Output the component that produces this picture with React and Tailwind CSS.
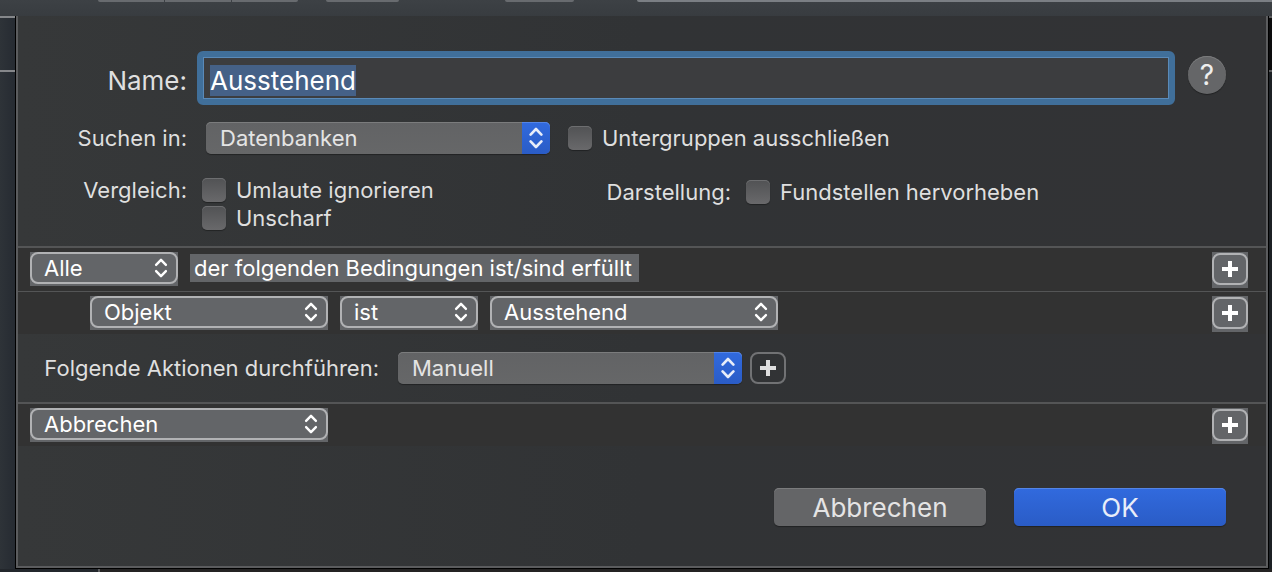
import { useEffect, useRef } from "react";

function Chevrons({ className }) {
  return (
    <svg viewBox="0 0 14 22" className={className} fill="none" stroke="currentColor" strokeWidth="2.6" strokeLinecap="round" strokeLinejoin="round" aria-hidden="true">
      <path d="M1.6 7.6 7 2l5.4 5.6M1.6 14.4 7 20l5.4-5.6" />
    </svg>
  );
}

function Plus() {
  return (
    <svg viewBox="0 0 16 16" className="h-4 w-4" fill="currentColor" aria-hidden="true">
      <path d="M6 0h4v6h6v4h-6v6H6v-6H0V6h6z" />
    </svg>
  );
}

function PopUp({ id, option }) {
  return (
    <div className="grid w-[344px] rounded-[5px] bg-linear-to-b from-[#626365] to-[#666768] shadow-[0_1px_1px_rgba(0,0,0,0.35),inset_0_1px_0_#7b7c7d]">
      <select id={id} className="col-start-1 row-start-1 h-8 w-full appearance-none bg-transparent pl-[14px] text-[22px] leading-8 text-[#e4e4e4] outline-none">
        <option>{option}</option>
      </select>
      <span className="pointer-events-none col-start-1 row-start-1 flex h-8 w-7 items-center justify-center justify-self-end rounded-r-[5px] bg-linear-to-b from-[#316ade] to-[#2a5cc6] text-[#e8edf9] shadow-[inset_0_1px_0_#5485e6]">
        <Chevrons className="h-[22px] w-[14px]" />
      </span>
    </div>
  );
}

function RuleSelect({ label, option, width }) {
  return (
    <div className={`grid bg-[#636568] pb-[2px] ${width}`}>
      <select aria-label={label} className="col-start-1 row-start-1 h-8 w-full appearance-none rounded-lg border-2 border-[#b1b2b4] bg-transparent pl-3 text-[22px] leading-7 text-white outline-none">
        <option>{option}</option>
      </select>
      <span className="pointer-events-none col-start-1 row-start-1 flex h-8 items-center justify-self-end pr-[10px] text-white">
        <Chevrons className="h-5 w-[14px]" />
      </span>
    </div>
  );
}

function RuleAdd({ label }) {
  return (
    <div className="ml-auto h-9 w-9 bg-[#636568] pt-px">
      <button type="button" aria-label={label} className="flex h-8 w-9 items-center justify-center rounded-lg border-2 border-[#b1b2b4] text-white">
        <Plus />
      </button>
    </div>
  );
}

function Check({ children }) {
  return (
    <label className="flex h-7 items-center gap-[10px]">
      <input type="checkbox" className="h-6 w-6 appearance-none rounded-[5px] bg-linear-to-b from-[#515254] to-[#69696b] shadow-[0_1px_1px_rgba(0,0,0,0.35),inset_0_1px_0_#6d6e70]" />
      <span>{children}</span>
    </label>
  );
}

export default function App() {
  const nameRef = useRef(null);

  useEffect(() => {
    nameRef.current.focus();
    nameRef.current.select();
  }, []);

  return (
    <div className="flex min-h-screen flex-col bg-[#242323] font-['Inter',sans-serif] text-[22px] leading-7 font-[425] text-[#dfdfdf]">
      <header className="flex h-4 bg-linear-to-b from-[#3d4145] to-[#383c40] pl-[98px]">
        <div className="flex h-[2px] w-[200px] gap-px overflow-hidden rounded-b-md">
          <span className="flex-1 bg-[#686b6f]" />
          <span className="flex-1 bg-[#686b6f]" />
          <span className="flex-1 bg-[#686b6f]" />
        </div>
        <div className="ml-7 h-[2px] w-[73px] rounded-b-md bg-[#686b6f]" />
        <div className="ml-[106px] h-[2px] w-[69px] rounded-b-md bg-[#686b6f]" />
        <div className="ml-[63px] h-[2px] flex-1 rounded-bl-md bg-[#7b7f84]" />
      </header>

      <div className="flex flex-1">
        <div className="w-[15px] bg-linear-to-r from-[#2e3338] to-[#262b32]">
          <div className="h-14 border-y-2 border-[#85878a]" />
        </div>

        <form onSubmit={(e) => e.preventDefault()} className="flex min-w-0 flex-1 flex-col border-x border-b border-black">
          <div className="flex flex-1 flex-col border-x-2 border-b-2 border-[#5b5c5e] bg-linear-to-r from-[#363839] via-[#313335] to-[#323335]">
            <div className="flex items-center pt-[35px] pr-10">
              <label htmlFor="name" className="w-[169px] pt-[6px] text-right text-[26px] font-normal">Name:</label>
              <input
                id="name"
                ref={nameRef}
                type="text"
                defaultValue="Ausstehend"
                className="ml-[10px] h-[54px] min-w-0 flex-1 rounded-md border-6 border-[#406f9a] bg-[#3c3d3f] pt-1 pl-[7px] text-[26px] leading-[34px] font-normal text-white shadow-[inset_0_0_0_1px_#5a8ab8] outline-none selection:bg-[#466289]/99 selection:text-white"
              />
              <button type="button" aria-label="Hilfe" className="mb-[6px] ml-[13px] flex h-[38px] w-[38px] items-center justify-center rounded-full bg-[#656668] text-[28px] leading-none font-normal text-[#eeeeee] shadow-[0_1px_1px_rgba(0,0,0,0.35),inset_0_1px_0_#7b7c7d]">
                ?
              </button>
            </div>

            <div className="mt-[17px] flex items-center">
              <label htmlFor="scope" className="w-[169px] text-right">Suchen in:</label>
              <div className="ml-[19px]">
                <PopUp id="scope" option="Datenbanken" />
              </div>
              <div className="ml-[18px]">
                <Check>Untergruppen ausschließen</Check>
              </div>
            </div>

            <div className="mt-[22px] flex items-start">
              <span className="w-[169px] text-right">Vergleich:</span>
              <div className="ml-[15px] w-[387px]">
                <Check>Umlaute ignorieren</Check>
                <Check>Unscharf</Check>
              </div>
              <div className="mt-[2px] flex">
                <span className="w-[142px] text-right">Darstellung:</span>
                <div className="ml-[15px]">
                  <Check>Fundstellen hervorheben</Check>
                </div>
              </div>
            </div>

            <div className="mt-[14px] flex h-[45px] items-start gap-3 border-t-2 border-[#545556] bg-[#323232] pt-1 pr-[18px] pl-3">
              <RuleSelect label="Verknüpfung" option="Alle" width="w-[148px]" />
              <span className="mt-[2px] bg-[#636568] pr-[7px] pl-1 text-white">der folgenden Bedingungen ist/sind erfüllt</span>
              <RuleAdd label="Bedingung hinzufügen" />
            </div>
            <div className="flex h-[43px] items-start gap-3 border-t border-[#545556] bg-[#323232] pt-1 pr-[18px] pl-[72px]">
              <RuleSelect label="Eigenschaft" option="Objekt" width="w-[238px]" />
              <RuleSelect label="Operator" option="ist" width="w-[138px]" />
              <RuleSelect label="Wert" option="Ausstehend" width="w-[288px]" />
              <RuleAdd label="Weitere Bedingung hinzufügen" />
            </div>

            <div className="flex items-center pt-[18px] pb-[18px]">
              <label htmlFor="actions" className="w-[361px] text-right">Folgende Aktionen durchführen:</label>
              <div className="ml-[19px]">
                <PopUp id="actions" option="Manuell" />
              </div>
              <button type="button" aria-label="Aktion hinzufügen" className="ml-2 flex h-8 w-9 items-center justify-center rounded-lg border-2 border-[#717274] text-[#dfdfdf]">
                <Plus />
              </button>
            </div>

            <div className="flex h-11 items-start border-t-2 border-[#545556] bg-[#323232] pt-1 pr-[18px] pl-3">
              <RuleSelect label="Aktion" option="Abbrechen" width="w-[298px]" />
              <RuleAdd label="Weitere Aktion hinzufügen" />
            </div>

            <div className="flex justify-end gap-7 pt-[42px] pr-10 pb-10 text-[26px] leading-[38px] font-normal">
              <button type="button" className="h-[38px] w-[212px] rounded-[5px] bg-[#646567] pt-px text-[#e4e4e4] shadow-[0_1px_1px_rgba(0,0,0,0.35),inset_0_1px_0_#7b7c7d]">Abbrechen</button>
              <button type="submit" className="h-[38px] w-[212px] rounded-[5px] bg-linear-to-b from-[#316ade] to-[#2a5cc6] pt-px text-[#e8edf9] shadow-[0_1px_1px_rgba(0,0,0,0.35),inset_0_1px_0_#5485e6]">OK</button>
            </div>
          </div>
        </form>

        <div className="w-[3px] bg-[#1c2024]">
          <div className="h-14 border-y-2 border-[#5b5c5e] bg-[#0c0c0d]" />
        </div>
      </div>
      <footer className="flex h-[3px] bg-[#242323]">
        <span className="w-[98px] bg-[#23272c]" />
        <span className="w-[2px] bg-[#5b5c5e]" />
      </footer>
    </div>
  );
}
